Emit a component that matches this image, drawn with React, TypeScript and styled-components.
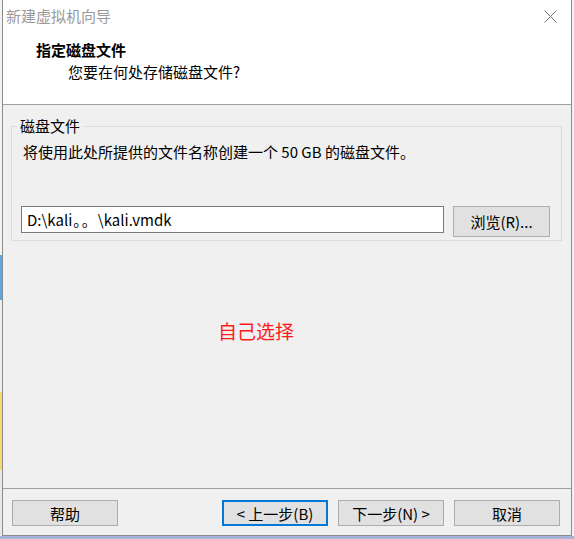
import React from "react";
import styled, { createGlobalStyle } from "styled-components";

const GlobalStyle = createGlobalStyle`
  html, body { margin: 0; padding: 0; }
  body {
    width: 574px;
    height: 539px;
    overflow: hidden;
    font-family: "Noto Sans CJK SC", "Noto Sans", sans-serif;
  }
  * { box-sizing: border-box; }
`;

const Desktop = styled.div`
  width: 574px;
  height: 539px;
  padding-left: 2px;
  background-color: #a7b4da;
  background-image:
    linear-gradient(to bottom, #f3f3f3 0px, #f3f3f3 255px, #5ba9e0 255px, #5ba9e0 300px, #eeeeee 300px, #eeeeee 392px, #f4d872 392px, #f4d872 470px, #e9e9e9 470px, #e9e9e9 536px, transparent 536px),
    linear-gradient(to bottom, #f2f2f2 0, #f2f2f2 536px, transparent 536px);
  background-size: 2px 100%, 100% 100%;
  background-repeat: no-repeat;
  background-position: 0 0, 0 0;
`;

const Window = styled.div`
  width: 570px;
  height: 536px;
  border: 1px solid #8c8c8c;
  border-top: none;
  background: #f0f0f0;
  display: flex;
  flex-direction: column;
  font-size: 15px;
  color: #000;
`;

const Header = styled.div`
  height: 105px;
  background: #ffffff;
  border-bottom: 1px solid #a0a0a0;
`;

const TitleBar = styled.div`
  height: 32px;
  display: flex;
  justify-content: space-between;
  align-items: flex-start;
  padding-left: 3px;
`;

const TitleText = styled.span`
  line-height: 32px;
  color: #9a9a9a;
  font-size: 15px;
`;

const CloseIcon = styled.svg`
  margin-top: 10px;
  margin-right: 14px;
`;

const Heading = styled.div`
  margin-top: 7px;
  margin-left: 33px;
  font-weight: bold;
  line-height: 22px;
`;

const SubHeading = styled.div`
  margin-left: 65px;
  line-height: 22px;
`;

const Content = styled.div`
  flex: 1;
  padding: 0 9px 0 8px;
  display: flex;
  flex-direction: column;
`;

const Group = styled.fieldset`
  margin: 12px 0 0 0;
  padding: 0 0 3px 9px;
  border: 1px solid #dcdcdc;
  min-width: 0;
`;

const GroupLegend = styled.legend`
  margin-left: -4px;
  padding: 0 3px;
  line-height: 18px;
`;

const Description = styled.div`
  margin-top: 7px;
  padding-left: 2px;
  line-height: 20px;
`;

const PathRow = styled.div`
  margin-top: 44px;
  display: flex;
  align-items: flex-start;
  gap: 9px;
`;

const PathInput = styled.div`
  width: 423px;
  height: 27px;
  border: 1px solid #7a7a7a;
  background: #ffffff;
  padding-left: 5px;
  line-height: 25px;
  white-space: nowrap;
`;

const WidePunct = styled.span`
  letter-spacing: 1px;
  padding-left: 1px;
`;

const Button = styled.div<{ $width: number; $height: number; $default?: boolean }>`
  width: ${(p) => p.$width}px;
  height: ${(p) => p.$height}px;
  background: #e1e1e1;
  border: 1px solid ${(p) => (p.$default ? "#0078d7" : "#adadad")};
  box-shadow: ${(p) => (p.$default ? "inset 0 0 0 1px #0078d7" : "none")};
  display: flex;
  align-items: center;
  justify-content: center;
  white-space: nowrap;
`;

const Note = styled.div`
  margin-top: 77px;
  margin-left: 207px;
  color: #ff1a1a;
  font-size: 19px;
  line-height: 26px;
`;

const Footer = styled.div`
  height: 47px;
  border-top: 1px solid #a0a0a0;
  display: flex;
  align-items: flex-start;
  padding: 11px 11px 0 9px;
  gap: 10px;
`;

const Spacer = styled.div`
  flex: 1;
`;

export default function App() {
  return (
    <>
      <GlobalStyle />
      <Desktop>
        <Window>
          <Header>
            <TitleBar>
              <TitleText>新建虚拟机向导</TitleText>
              <CloseIcon width="13" height="13" viewBox="0 0 13 13">
                <path d="M0.5 0.5 L12.5 12.5 M12.5 0.5 L0.5 12.5" stroke="#707070" strokeWidth="1" fill="none" />
              </CloseIcon>
            </TitleBar>
            <Heading>指定磁盘文件</Heading>
            <SubHeading>您要在何处存储磁盘文件?</SubHeading>
          </Header>
          <Content>
            <Group>
              <GroupLegend>磁盘文件</GroupLegend>
              <Description>将使用此处所提供的文件名称创建一个 50 GB 的磁盘文件。</Description>
              <PathRow>
                <PathInput>
                  D:\kali<WidePunct>。。</WidePunct>\kali.vmdk
                </PathInput>
                <Button $width={97} $height={31}>浏览(R)...</Button>
              </PathRow>
            </Group>
            <Note>自己选择</Note>
          </Content>
          <Footer>
            <Button $width={106} $height={26}>帮助</Button>
            <Spacer />
            <Button $width={106} $height={26} $default>&lt; 上一步(B)</Button>
            <Button $width={106} $height={26}>下一步(N) &gt;</Button>
            <Button $width={106} $height={26}>取消</Button>
          </Footer>
        </Window>
      </Desktop>
    </>
  );
}
